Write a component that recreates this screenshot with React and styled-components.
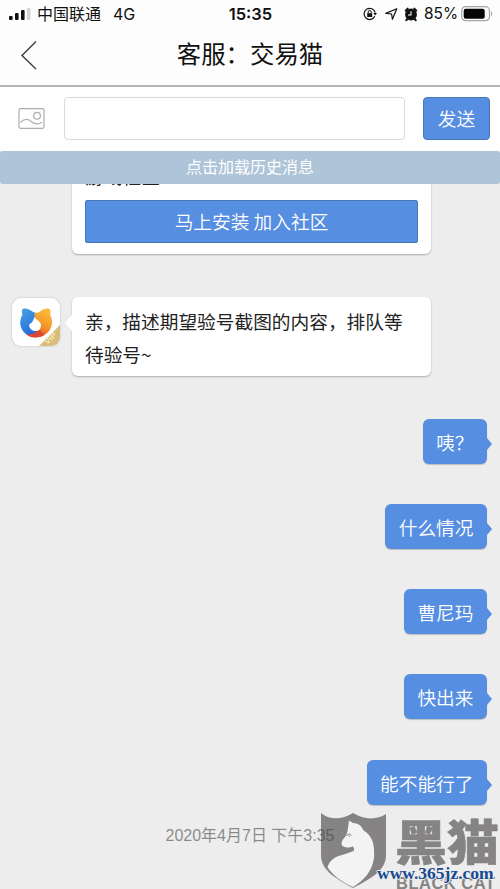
import React from 'react'
import styled, { createGlobalStyle } from 'styled-components'

const GlobalStyle = createGlobalStyle`
  * {
    box-sizing: border-box;
  }
  body {
    margin: 0;
    background: #ededed;
    font-family: 'Liberation Sans', 'Noto Sans CJK SC', sans-serif;
  }
`

const Screen = styled.div`
  position: relative;
  display: flex;
  flex-direction: column;
  width: 500px;
  height: 889px;
  overflow: hidden;
  background: #ededed;
`

const StatusBar = styled.header`
  display: grid;
  grid-template-columns: 1fr auto 1fr;
  align-items: center;
  height: 28px;
  padding: 0 7px 0 9px;
  background: #fdfdfd;
  color: #111;
  font-family: Inter, 'Noto Sans CJK SC', sans-serif;
  font-size: 16px;
  line-height: 28px;
`

const StatusGroup = styled.div`
  display: flex;
  align-items: center;
  justify-content: ${props => props.$end ? 'flex-end' : 'flex-start'};
  white-space: nowrap;
`

const Carrier = styled.span`
  margin: 0 12px 0 6px;
`

const Clock = styled.span`
  padding-right: 1px;
  font-size: 16.5px;
  font-weight: 600;
`

const Percent = styled.span`
  margin: 0 3px 0 6px;
  font-size: 15.4px;
`

const StatusIcon = styled.svg`
  display: block;
  flex: none;
  margin-left: ${props => props.$gap || 0}px;
`

const NavBar = styled.nav`
  display: grid;
  grid-template-columns: 60px 1fr 60px;
  align-items: center;
  height: 59px;
  padding-bottom: 4px;
  border-bottom: 2px solid #b3b5b4;
  background: #fdfdfd;
`

const BackButton = styled.button`
  display: flex;
  padding: 0 0 0 20px;
  border: 0;
  background: none;
`

const Title = styled.h1`
  margin: -3px 0 0;
  color: #111;
  font-family: 'Noto Sans CJK SC', sans-serif;
  font-size: 24.4px;
  font-weight: 400;
  line-height: 50px;
  text-align: center;
`

const Composer = styled.form`
  display: flex;
  align-items: center;
  height: 64px;
  padding: 0 10px 1px 18px;
  background: #fefefe;
`

const MessageInput = styled.input`
  width: 341px;
  height: 43px;
  margin: 0 18px 0 19px;
  border: 1px solid #d9d9d9;
  border-radius: 4px;
  background: #fff;
`

const Action = styled.button`
  width: ${props => props.$wide ? '333px' : '67px'};
  height: 43px;
  padding: 0;
  border: 1px solid #4877b8;
  border-radius: ${props => props.$wide ? 2 : 4}px;
  background: #568ee1;
  color: #fff;
  font-family: 'Noto Sans CJK SC', sans-serif;
  font-size: 18.7px;
  font-weight: 350;
  line-height: ${props => props.$wide ? 38 : 40}px;
  vertical-align: top;

  span {
    display: block;
    margin-top: -2px;
  }
`

const HistoryBar = styled.div`
  flex: none;
  z-index: 1;
  height: 33px;
  border-radius: 3px;
  background: #aec4d8;
  color: #fff;
  font-size: 16px;
  line-height: 33px;
  text-align: center;
`

const Conversation = styled.main`
  display: flex;
  flex: 1;
  flex-direction: column;
  min-height: 0;
`

const Incoming = styled.div`
  display: flex;
  flex: none;
  align-items: flex-start;
  padding-left: ${props => props.$noAvatar ? 72 : 12}px;
  margin-top: ${props => props.$noAvatar ? -22 : 43}px;
`

const Card = styled.div`
  position: relative;
  width: 359px;
  padding: ${props => props.$promo ? '0 13px 11px' : '7px 13px 6px'};
  border-radius: 6px;
  background: #fff;
  box-shadow: 0 1px 2px rgba(0, 0, 0, 0.28);
  color: #222;
  font-size: 18.7px;
  font-family: 'Noto Sans CJK SC', sans-serif;
  line-height: 33px;
`

const CardTitle = styled.div`
  height: 38px;
  line-height: 27px;
`

const Tail = styled.i`
  position: absolute;
  top: ${props => props.$out ? 19 : 18}px;
  ${props => props.$out ? 'right: -5px;' : 'left: -7px;'}
  border: solid transparent;
  border-width: ${props => props.$out ? '6px 0 6px 5px' : '8px 0'};
  ${props => props.$out
    ? 'border-left-color: #568ee1;'
    : 'border-right: 7px solid #fff;'}
`

const Avatar = styled.svg`
  display: block;
  flex: none;
  margin: 1px 12px 0 0;
  border-radius: 9px;
  background: #fff;
  box-shadow: 0 0 2px rgba(0, 0, 0, 0.25);
`

const Outgoing = styled.div`
  display: flex;
  flex-direction: column;
  align-items: flex-end;
  gap: 40.3px;
  padding: 42.5px 13px 0 0;
`

const Bubble = styled.div`
  position: relative;
  height: 45px;
  padding: 0 13.5px;
  border-radius: 6px;
  background: #568ee1;
  box-shadow: 0 1px 1px rgba(0, 0, 0, 0.2);
  color: #fff;
  font-family: 'Noto Sans CJK SC', sans-serif;
  font-size: 18.7px;
  font-weight: 350;
  line-height: 45px;
  white-space: nowrap;
`

const Timestamp = styled.time`
  position: relative;
  z-index: 2;
  align-self: center;
  margin-top: 19px;
  color: rgba(70, 70, 70, 0.6);
  font-size: 16px;
  line-height: 24px;
`

const Watermark = styled.div`
  position: absolute;
  left: 320px;
  top: 812px;
  width: 180px;
  height: 77px;
  overflow: hidden;
  color: #858383;
`

const Shield = styled.svg`
  display: block;
`

const BrandName = styled.div`
  position: absolute;
  left: 75px;
  top: 4px;
  font-family: 'Noto Sans CJK SC', sans-serif;
  font-size: 52px;
  font-weight: 900;
  line-height: 52px;
  transform: scaleY(0.92);
  transform-origin: 0 0;
  -webkit-text-stroke: 0.6px #858383;
  white-space: nowrap;
`

const BrandLatin = styled.div`
  position: absolute;
  left: 76px;
  top: 62px;
  font-size: 16.5px;
  font-weight: 700;
  line-height: 18px;
  letter-spacing: 0.5px;
  white-space: nowrap;
`

const SiteUrl = styled.div`
  position: absolute;
  left: 57px;
  top: 51px;
  color: #174a91;
  font-family: 'Liberation Serif', serif;
  font-size: 17.5px;
  font-weight: 700;
  line-height: 20px;
  text-shadow: 1px 0 #eee, -1px 0 #eee, 0 1px #eee, 0 -1px #eee;
`

const replies = ['咦？', '什么情况', '曹尼玛', '快出来', '能不能行了']

const Signal = () => (
  <StatusIcon width='22' height='14' viewBox='0 0 22 14'>
    <rect x='0' y='9' width='3.6' height='4' rx='1' fill='#111' />
    <rect x='6' y='6' width='3.6' height='7' rx='1' fill='#111' />
    <rect x='12' y='3' width='3.6' height='10' rx='1' fill='#111' />
    <rect x='18' y='1' width='3.4' height='12' rx='1' fill='#d2d2d2' />
  </StatusIcon>
)

const RotationLock = () => (
  <StatusIcon width='14' height='14' viewBox='0 0 14 14' fill='none' stroke='#111'>
    <path d='M11.8 9.3A5.6 5.6 0 1 1 12.2 5.7' strokeWidth='1.2' />
    <path d='M10.3 6h3.7l-1.8 2.5z' fill='#111' stroke='none' />
    <rect x='4.2' y='6.2' width='5' height='3.8' fill='#111' stroke='none' />
    <path d='M5.2 6.4V5a1.5 1.5 0 0 1 3 0v1.4' />
  </StatusIcon>
)

const LocationArrow = () => (
  <StatusIcon $gap={8} width='13' height='12' viewBox='0 0 13 12' fill='none' stroke='#111' strokeWidth='1.2' strokeLinejoin='round'>
    <path d='M.8 5.4 11.8.8 7.4 11.2 6.6 6z' />
  </StatusIcon>
)

const Alarm = () => (
  <StatusIcon $gap={6} width='14' height='15' viewBox='0 0 14 15'>
    <circle cx='7' cy='7.5' r='5.9' fill='#111' />
    <path d='M1.7 3.6 3.7 1.6M12.3 3.6l-2-2M3.3 12l-1.1 1.3M10.7 12l1.1 1.3' stroke='#111' strokeWidth='2' strokeLinecap='round' />
    <path d='M7 4.3V8H4' fill='none' stroke='#fff' strokeWidth='1.1' />
  </StatusIcon>
)

const Battery = () => (
  <StatusIcon width='32' height='16' viewBox='0 0 32 16'>
    <rect x='.7' y='.7' width='27.8' height='14' rx='4' fill='none' stroke='#a5a5a5' strokeWidth='1.2' />
    <rect x='2.7' y='2.7' width='21' height='10' rx='2' fill='#050505' />
    <path d='M30 5.2c1.6.7 1.6 4.3 0 5z' fill='#a5a5a5' />
  </StatusIcon>
)

const CatAvatar = () => (
  <Avatar width='48' height='48' viewBox='0 0 48 48'>
    <defs>
      <linearGradient id='blueFur' x2='0.5' y2='1'>
        <stop stopColor='#4ba3e5' />
        <stop offset='1' stopColor='#246bd9' />
      </linearGradient>
      <linearGradient id='goldFur' x1='0.7' x2='0.3' y2='1'>
        <stop stopColor='#fdbb3d' />
        <stop offset='.5' stopColor='#f39a28' />
        <stop offset='1' stopColor='#e2482f' />
      </linearGradient>
    </defs>
    <path d='M25 15c-5 0-7-5-13-4.500-2.500.500-2.500 3.500-1.500 6C5.500 25 9 34 17 38l9-3z' fill='url(#blueFur)' />
    <path d='M22 15.500c6 0 8-5.500 14-5 3 .500 3 3.500 2 6 4.500 8 1.500 17-6.500 21-5 2.700-10.500 2.700-15 .500 4-1 8-3 10-7z' fill='url(#goldFur)' />
    <path d='M14.500 36.500c5 0 9-1.500 13-4.500l5 5c-5.500 3-12.500 3.200-18-.500z' fill='#df4533' />
    <path d='M22.500 18.500c.500 3 6.500 5 6.500 8.500 0 4-2.500 6.500-6 6-3.500 0-6-3-6-6.500 2.500-1 4.500-4 5.500-8z' fill='#fff' />
    <path d='M48 27V48H27z' fill='#d8bd79' />
    <text x='0' y='0' transform='translate(35.5 47) rotate(-45)' fill='#fff8de' fontFamily='Liberation Sans, sans-serif' fontSize='8.5'>VIP</text>
  </Avatar>
)

const App = () => (
  <Screen>
    <GlobalStyle />
    <StatusBar>
      <StatusGroup>
        <Signal />
        <Carrier>中国联通</Carrier>
        <span>4G</span>
      </StatusGroup>
      <Clock>15:35</Clock>
      <StatusGroup $end>
        <RotationLock />
        <LocationArrow />
        <Alarm />
        <Percent>85%</Percent>
        <Battery />
      </StatusGroup>
    </StatusBar>
    <NavBar>
      <BackButton type='button' aria-label='返回'>
        <svg width='18' height='30' viewBox='0 0 18 30' fill='none' stroke='#444' strokeWidth='1.5'>
          <path d='M16 1.5 2 15.5 16 29' />
        </svg>
      </BackButton>
      <Title>客服：交易猫</Title>
    </NavBar>
    <Composer>
      <svg width='27' height='21' viewBox='0 0 27 21' fill='none' stroke='#adadad' strokeWidth='1.2'>
        <rect x='1' y='.7' width='25' height='19.6' rx='1.5' />
        <circle cx='19' cy='7.8' r='3.4' />
        <path d='M2.5 14.5c3.5-4 8-4 11-.8 3 2.6 7 2.8 10.5.6' />
      </svg>
      <MessageInput aria-label='消息' />
      <Action type='button'><span>发送</span></Action>
    </Composer>
    <HistoryBar>点击加载历史消息</HistoryBar>
    <Conversation>
      <Incoming $noAvatar>
        <Card $promo>
          <CardTitle>游戏社区</CardTitle>
          <Action type='button' $wide><span>马上安装 加入社区</span></Action>
        </Card>
      </Incoming>
      <Incoming>
        <CatAvatar />
        <Card>
          <Tail />
          亲，描述期望验号截图的内容，排队等待验号~
        </Card>
      </Incoming>
      <Outgoing>
        {replies.map(text => (
          <Bubble key={text}>
            {text}
            <Tail $out />
          </Bubble>
        ))}
      </Outgoing>
      <Timestamp>2020年4月7日 下午3:35</Timestamp>
    </Conversation>
    <Watermark>
      <Shield width='68' height='77' viewBox='0 0 68 77'>
        <path d='M1 1c8 7 21 7 32 0 11 7 24 7 33 1v41c0 16-16 24-33 33C17 67 1 59 1 43z' fill='currentColor' />
        <path d='M29 8.5 33 11c5 0 9 3 10 7 7 4 11 11 11 20 1 10-2 18-7 25-4 5-9 9-14 12C22 70 12 63 7.5 55c2-6 6-9 11-11 6-2 11-3 15-5 1-1.500.500-3-.500-4.500-4 1.500-8 1.500-11-1-1-2 0-4 .500-5.500 3-3 4.500-6 5-9z' fill='#f3f3f3' />
        <path d='M26.5 24c.5-2 3.500-2.500 5-.5M28.500 24H30' fill='none' stroke='#858383' strokeWidth='1' />
      </Shield>
      <BrandName>黑猫</BrandName>
      <BrandLatin>BLACK CAT</BrandLatin>
      <SiteUrl>www.365jz.com</SiteUrl>
    </Watermark>
  </Screen>
)

export default App
